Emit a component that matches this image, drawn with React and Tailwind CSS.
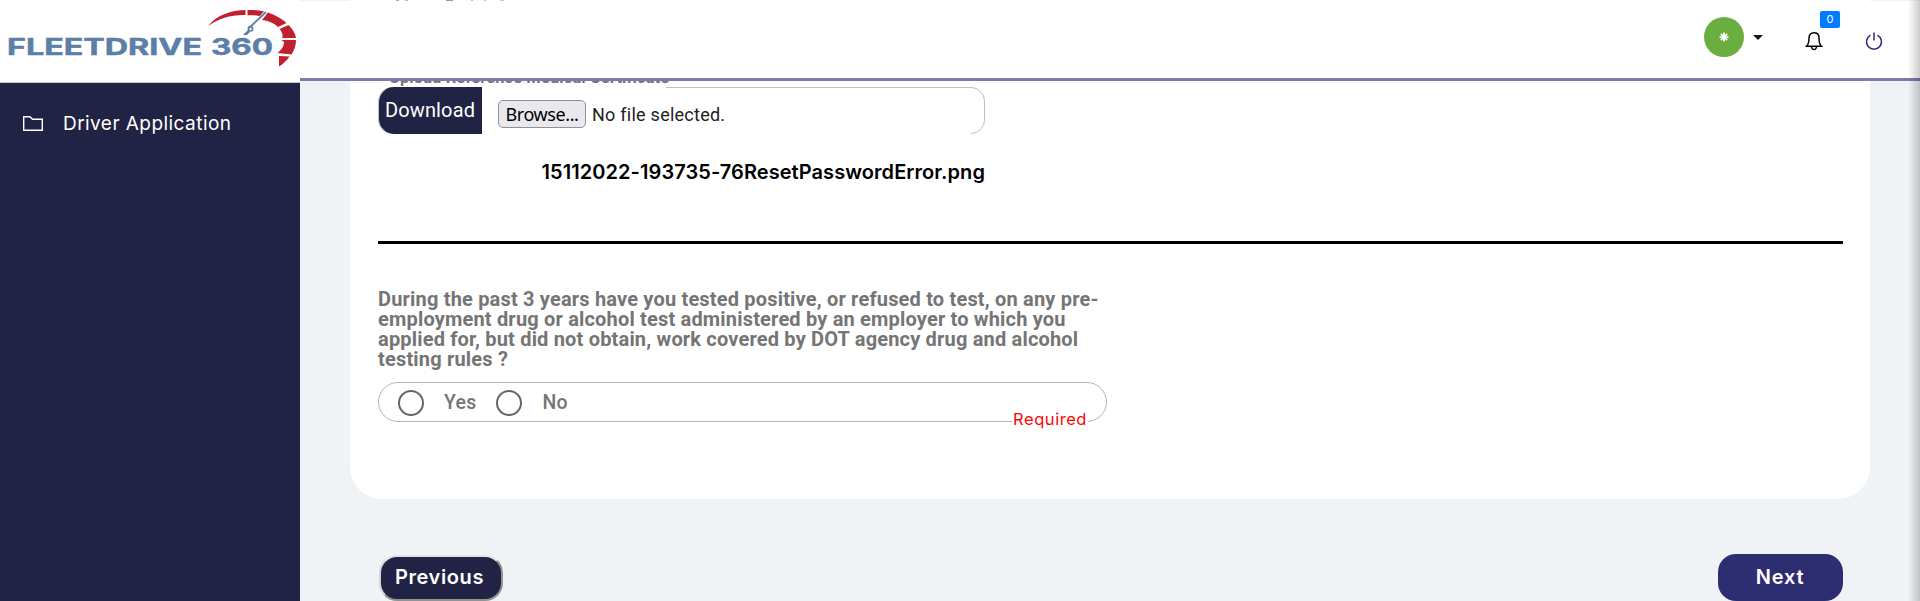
import React from "react";

function Logo() {
  return (
    <svg width="300" height="82" viewBox="0 0 300 82" role="img" aria-label="FleetDrive 360">
      <g fill="#5b7fa6" stroke="#5b7fa6" strokeWidth="0.5" fontFamily="Inter, sans-serif" fontWeight="700" fontSize="22.8">
        <text x="7" y="54.7" textLength="195" lengthAdjust="spacingAndGlyphs">FLEETDRIVE</text>
        <text x="211" y="54.7" textLength="62" lengthAdjust="spacingAndGlyphs">360</text>
      </g>
      <g fill="#c1202f">
        <path d="M208 26C217 15 231 10 245.500 10V15C232 14.500 219 18 208 26Z" />
        <path d="M247.500 10C253 9.600 259 10.200 264 11.500L259.500 16.200C255.500 15.200 251.500 15 247.500 15.200Z" />
        <path d="M268 12.500C275 15 281.500 18.500 286.500 23L278 27C274 23 268 20.500 262 20Z" />
        <path d="M288.500 25C292.500 29 295.500 33.500 296 38H282C283.500 36 282 31.500 279.500 29Z" />
        <path d="M296 40C296 45 294.500 50 291.500 54.500L277.500 53C281.500 50 284 46 284 42L281.500 40Z" />
        <path d="M289.500 56.500C287 60.500 283 64 279 66.500L279 56Z" />
      </g>
      <path d="M266 12L249 28" stroke="#5b7fa6" strokeWidth="1.8" />
      <circle cx="250.500" cy="28.700" r="2.100" fill="none" stroke="#5b7fa6" strokeWidth="1.700" />
      <path d="M248 30L250 32L247 35H243Z" fill="#5b7fa6" />
    </svg>
  );
}

function Sidebar() {
  return (
    <aside className="flex h-full w-[300px] shrink-0 flex-col bg-[#212344]">
      <div className="h-[83px] border-b border-[#c5c5cd] bg-white">
        <Logo />
      </div>
      <nav className="flex items-center pt-[27px] pl-[22px]">
        <svg width="22" height="18" viewBox="0 0 22 18" fill="none" stroke="white" strokeWidth="1.4">
          <path d="M1.700 2.700H8L10.500 5.200H20.300V16.300H1.700Z" />
        </svg>
        <span className="mt-[2px] ml-[19px] text-[19px] leading-6 tracking-[0.45px] whitespace-nowrap text-white">Driver Application</span>
      </nav>
    </aside>
  );
}

function Header() {
  return (
    <header className="flex h-[80px] shrink-0 items-start justify-end border-b-[3px] border-[#7d7bac] bg-white">
      <div className="mt-4 flex h-10 w-10 items-center justify-center rounded-full bg-[#69ae3e]">
        <svg width="10" height="10" viewBox="-5 -5 10 10" stroke="white" strokeWidth="1.700">
          <path d="M0-4.500V4.500M-4.500 0H4.500M-3.200-3.200L3.200 3.200M3.200-3.200L-3.200 3.200" />
        </svg>
      </div>
      <svg className="mt-[34px] ml-[9px]" width="10" height="5" viewBox="0 0 10 5">
        <path d="M0 0H10L5 5Z" fill="#16161e" />
      </svg>
      <div className="relative mt-[30px] ml-[42px] h-5 w-[18px]">
        <svg width="18" height="20" viewBox="0 0 18 20" fill="none" stroke="black" strokeWidth="1.500">
          <path d="M1.500 15.300C3.500 13.500 4 11 4 7C4 3.500 6 1.800 9 1.800S14 3.500 14 7C14 11 14.500 13.500 16.500 15.300ZM6.500 16C7 19.300 11 19.300 11.500 16" />
        </svg>
        <span className="absolute -top-5 left-[15px] flex h-[17px] w-5 items-center justify-center rounded-[2px] bg-[#007bff] text-[11px] text-white">0</span>
      </div>
      <svg className="mt-[31px] mr-[37px] ml-[42px]" width="18" height="19" viewBox="0 0 18 19" fill="none" stroke="#2d2c80" strokeWidth="1.500">
        <path d="M9 0.500V8.500M5.500 3.100A7.500 7.500 0 1 0 12.500 3.100" />
      </svg>
    </header>
  );
}

function CertificateUpload() {
  return (
    <section className="w-[607px]">
      <div className="flex h-[6px] items-end overflow-hidden pl-[11px] font-[Roboto] text-[16.500px] font-bold tracking-[0.09px] text-[#757575]">
        <span className="-mb-[1px] leading-5 whitespace-nowrap">Upload Reference Medical Certificate</span>
      </div>
      <div className="relative flex h-[47px] font-[Roboto]">
        <div className="pointer-events-none absolute inset-0 rounded-[14px] border border-[#bfbfbf]" />
        <div className="absolute top-0 left-[104px] h-px w-[184px] bg-white" />
        <div className="absolute bottom-0 left-[104px] h-px w-[489px] bg-white" />
        <button className="relative ml-px flex h-[47px] w-[103px] items-center justify-center rounded-l-[15px] bg-[#212344] pr-px pb-px text-[20px] tracking-[0.15px] text-white">Download</button>
        <div className="mt-[13px] ml-4 flex h-7 items-center">
          <button className="flex h-7 w-[88px] items-center justify-center rounded-[5px] border border-[#8f8f9d] bg-[#e9e9ed] font-['Noto_Sans'] text-[18px] tracking-[-0.4px] text-black">Browse...</button>
          <span className="ml-[6px] text-[18px] tracking-[0.25px] whitespace-nowrap text-[#212121]">No file selected.</span>
        </div>
      </div>
      <p className="mt-[24px] text-right text-[20px] leading-7 font-semibold tracking-[0.070px] whitespace-nowrap text-black">15112022-193735-76ResetPasswordError.png</p>
    </section>
  );
}

function RadioOption({ label }) {
  return (
    <label className="flex items-center">
      <span className="h-[26px] w-[26px] rounded-full border-[2.500px] border-[#666]" />
      <span className="mt-px ml-5 text-[19.500px] font-medium tracking-[0.2px]">{label}</span>
    </label>
  );
}

function DrugTestQuestion() {
  return (
    <section className="mt-[45px] font-[Roboto] text-[#757575]">
      <p className="text-[20px] leading-5 font-bold tracking-[0.180px] whitespace-nowrap">
        During the past 3 years have you tested positive, or refused to test, on any pre-<br />
        employment drug or alcohol test administered by an employer to which you<br />
        applied for, but did not obtain, work covered by DOT agency drug and alcohol<br />
        testing rules ?
      </p>
      <div className="relative mt-[13px] flex h-10 w-[729px] items-center gap-5 rounded-[20px] border border-[#b5b5b5] pt-px pl-[19px]">
        <RadioOption label="Yes" />
        <RadioOption label="No" />
        <span className="absolute right-[18px] -bottom-[8px] bg-white px-px font-[Inter] text-[16.500px] leading-5 tracking-[0.55px] text-[#fa0505]">Required</span>
      </div>
    </section>
  );
}

export default function App() {
  return (
    <div className="relative flex h-[601px] w-full overflow-hidden bg-[#eff3f6] font-[Inter]">
      <Sidebar />
      <main className="flex min-w-0 flex-1 flex-col">
        <div className="mx-[50px] h-px shrink-0 overflow-hidden bg-white pl-[46px]">
          <div className="flex">
            <i className="h-px w-[3px] bg-[#aaa]" />
            <i className="ml-[6px] h-px w-[3px] bg-[#bbb]" />
            <i className="ml-[38px] h-px w-[7px] bg-[#999]" />
            <i className="ml-[18px] h-px w-[2px] bg-[#bbb]" />
            <i className="ml-[11px] h-px w-[2px] bg-[#bbb]" />
            <i className="ml-[14px] h-px w-[4px] bg-[#ccc]" />
          </div>
        </div>
        <Header />
        <div className="mx-[50px] h-[418px] shrink-0 rounded-b-[32px] bg-white px-7 pr-[27px]">
          <CertificateUpload />
          <hr className="mt-[55px] border-t-[3px] border-black" />
          <DrugTestQuestion />
        </div>
        <div className="mt-[55px] flex items-start justify-between pr-[77px] pl-[79px]">
          <button className="mt-px flex h-[46px] w-[124px] items-center justify-center rounded-[18px] border-2 border-t-[#e3e3e3] border-r-[#929292] border-b-[#929292] border-l-[#d5d5d5] bg-[#212344] pr-[3px] pb-[2px] text-[20px] font-semibold tracking-[0.600px] text-white">Previous</button>
          <button className="flex h-[47px] w-[125px] items-center justify-center rounded-[18px] bg-[#2d2d72] pr-px pb-px text-[20px] font-semibold tracking-[0.800px] text-white">Next</button>
        </div>
      </main>
      <div className="pointer-events-none absolute inset-y-0 right-0 w-3 bg-linear-to-r from-transparent to-black/20" />
    </div>
  );
}
